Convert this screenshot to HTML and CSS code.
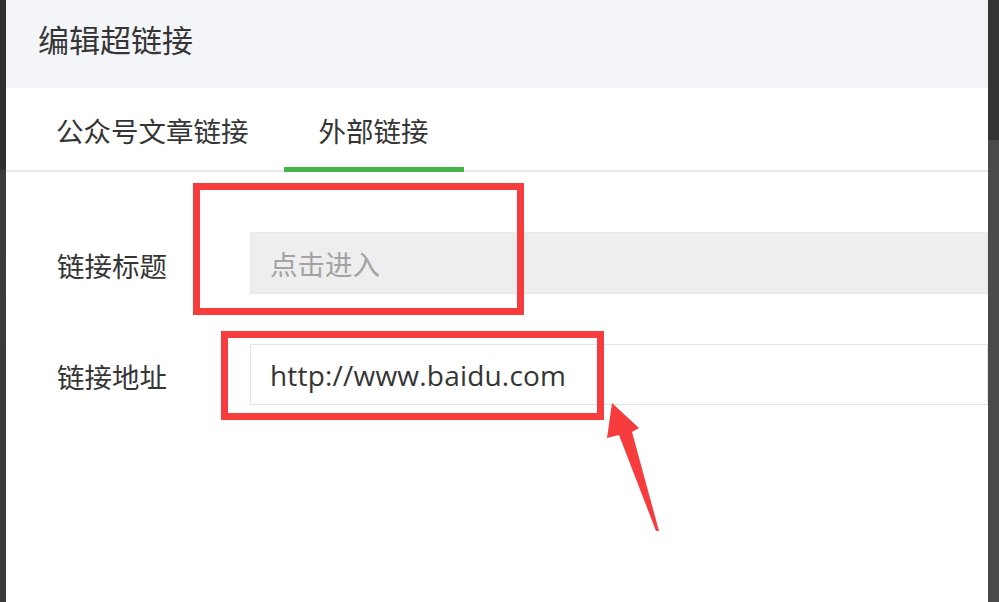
FILE: index.html
```html
<!DOCTYPE html>
<html lang="zh-CN">
<head>
<meta charset="utf-8">
<title>编辑超链接</title>
<link rel="stylesheet" href="styles.css">
</head>
<body>
<div class="page">
  <div class="edge edge-left"></div>
  <div class="dialog">
    <div class="dialog-header">
      <h1 class="dialog-title">编辑超链接</h1>
    </div>
    <div class="tabs">
      <div class="tab">公众号文章链接</div>
      <div class="tab tab-active">外部链接</div>
    </div>
    <div class="form">
      <div class="form-row">
        <div class="form-label">链接标题</div>
        <div class="input input-disabled"><span class="placeholder">点击进入</span></div>
      </div>
      <div class="form-row">
        <div class="form-label">链接地址</div>
        <div class="input"><span class="value">http://www.baidu.com</span></div>
      </div>
    </div>
  </div>
  <div class="edge edge-right"></div>

  <div class="mark mark-title"></div>
  <div class="mark mark-url"></div>
  <svg class="arrow" width="999" height="602" viewBox="0 0 999 602">
    <polygon points="612,403 639,428 632,432 659,531 656,531 619,435 607,438" fill="#f63c3c"/>
  </svg>
</div>
</body>
</html>
```

FILE: styles.css
```css
html, body {
  margin: 0;
  padding: 0;
  background: #ffffff;
}

.page {
  position: relative;
  width: 999px;
  height: 602px;
  display: flex;
  overflow: hidden;
  font-family: "Open Sans", "Noto Sans CJK SC", sans-serif;
  color: #353535;
}

.edge {
  flex: none;
}

.edge-left {
  width: 6px;
  background: linear-gradient(to bottom, #2f2f2f 0, #2f2f2f 170px, #3d3b39 170px, #3a3a3a 100%);
}

.edge-right {
  width: 11px;
  background: linear-gradient(to bottom, #333333 0, #333333 140px, #4a4a4a 140px, #4a4a4a 100%);
}

.dialog {
  flex: 1;
  display: flex;
  flex-direction: column;
  background: #ffffff;
}

.dialog-header {
  height: 88px;
  background: #f4f5f9;
  padding-left: 32px;
  box-sizing: border-box;
}

.dialog-title {
  margin: 0;
  font-weight: normal;
  font-size: 31px;
  line-height: 78px;
  font-family: "Noto Sans CJK SC", sans-serif;
  color: #353535;
}

.tabs {
  display: flex;
  align-items: flex-start;
  height: 84px;
  box-sizing: border-box;
  padding-left: 15px;
  border-bottom: 2px solid #e7e7eb;
}

.tab {
  padding: 6px 35px 0;
  height: 84px;
  line-height: 73px;
  box-sizing: border-box;
  font-size: 27.5px;
  font-family: "Noto Sans CJK SC", sans-serif;
  color: #353535;
  border-bottom: 5px solid transparent;
  margin-bottom: -2px;
}

.tab-active {
  border-bottom-color: #44b549;
}

.form {
  display: flex;
  flex-direction: column;
  gap: 50px;
  padding-top: 60px;
  padding-left: 51px;
}

.form-row {
  display: flex;
  align-items: center;
}

.form-label {
  width: 193px;
  font-size: 27.5px;
  font-family: "Noto Sans CJK SC", sans-serif;
  color: #353535;
  padding-top: 3px;
}

.input {
  flex: 1;
  height: 61px;
  box-sizing: border-box;
  border: 1px solid #e4e4e4;
  display: flex;
  align-items: center;
  padding-left: 19px;
  background: #ffffff;
}

.input-disabled {
  height: 62px;
  background: #eeeeee;
  border-color: #e8e8e8;
}

.placeholder {
  font-size: 27.5px;
  font-family: "Noto Sans CJK SC", sans-serif;
  color: #a3a3a3;
}

.value {
  font-size: 28px;
  letter-spacing: 0.2px;
  font-family: "Open Sans", "Noto Sans CJK SC", sans-serif;
  color: #353535;
}

.mark {
  position: absolute;
  box-sizing: border-box;
  border: 7px solid #f63c3c;
}

.mark-title {
  left: 193px;
  top: 183px;
  width: 331px;
  height: 132px;
}

.mark-url {
  left: 221px;
  top: 331px;
  width: 383px;
  height: 89px;
}

.arrow {
  position: absolute;
  left: 0;
  top: 0;
}
```
